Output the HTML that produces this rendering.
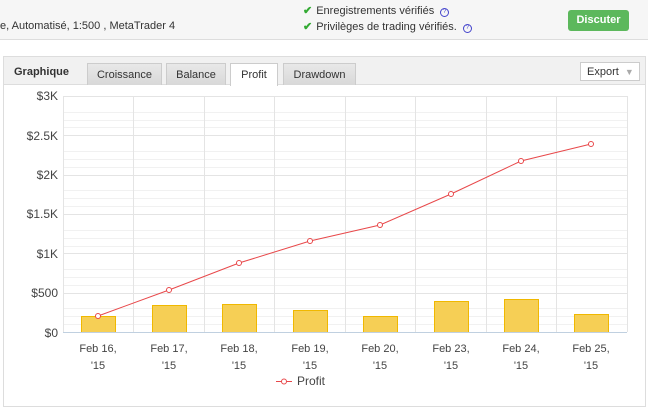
<!DOCTYPE html><html><head><meta charset="utf-8"><style>
body{margin:0;width:648px;height:406px;background:#fff;font-family:"Liberation Sans",sans-serif;position:relative;overflow:hidden}
.top{position:absolute;left:0;top:0;width:648px;height:39px;background:#f6f6f6;border-bottom:1px solid #ddd}
.t{position:absolute;font-size:11px;color:#333;white-space:nowrap}
.btn{position:absolute;left:568px;top:10px;width:61px;height:21px;background:#5cb85c;border-radius:3px;color:#fff;font-weight:bold;font-size:11px;text-align:center;line-height:21px}
.panel{position:absolute;left:3px;top:56px;width:641px;height:349px;border:1px solid #ddd;background:#fff}
.hdr{position:absolute;left:0;top:0;width:641px;height:27px;background:#f1f1f1;border-bottom:1px solid #ddd}
.tab{position:absolute;top:6px;height:21px;border:1px solid #ccc;border-bottom:none;font-size:11px;color:#333;text-align:center;line-height:22px;background:linear-gradient(#e8e8e8,#d8d8d8)}
.q{display:inline-block;width:7px;height:7px;border:1px solid #44c;border-radius:50%;font-size:6px;line-height:7px;text-align:center;color:#44c;margin-left:6px;vertical-align:1px}
.ck{color:#3a3;font-weight:bold;margin-right:4px}
</style></head><body>
<div class="top"></div>
<div class="t" style="left:0;top:20px">e, Automatisé, 1:500 , MetaTrader 4</div>
<div class="t" style="left:303px;top:4px"><span class="ck">✔</span>Enregistrements vérifiés<span class="q">?</span></div>
<div class="t" style="left:303px;top:20px"><span class="ck">✔</span>Privilèges de trading vérifiés.<span class="q">?</span></div>
<div class="btn">Discuter</div>
<div class="panel"><div class="hdr"></div>
<div class="t" style="left:10px;top:9px;font-weight:bold">Graphique</div>
<div class="tab" style="left:83px;width:73px">Croissance</div>
<div class="tab" style="left:162px;width:58px">Balance</div>
<div class="tab" style="left:226px;width:46px;background:#fff;height:22px">Profit</div>
<div class="tab" style="left:279px;width:71px">Drawdown</div>
<div style="position:absolute;left:576px;top:5px;width:60px;height:19px;background:#fff;border:1px solid #ccc;font-size:11px;color:#333;line-height:19px;padding-left:6px;box-sizing:border-box;white-space:nowrap">Export <span style="color:#aaa;font-size:9px;margin-left:3px">▼</span></div>
</div>
<svg style="position:absolute;left:0;top:0" width="648" height="406">
<g stroke="#f1f1f1" stroke-width="1">
<line x1="63" x2="627" y1="112.5" y2="112.5"/><line x1="63" x2="627" y1="120.5" y2="120.5"/><line x1="63" x2="627" y1="127.5" y2="127.5"/>
<line x1="63" x2="627" y1="151.5" y2="151.5"/><line x1="63" x2="627" y1="159.5" y2="159.5"/><line x1="63" x2="627" y1="167.5" y2="167.5"/>
<line x1="63" x2="627" y1="190.5" y2="190.5"/><line x1="63" x2="627" y1="198.5" y2="198.5"/><line x1="63" x2="627" y1="206.5" y2="206.5"/>
<line x1="63" x2="627" y1="230.5" y2="230.5"/><line x1="63" x2="627" y1="238.5" y2="238.5"/><line x1="63" x2="627" y1="246.5" y2="246.5"/>
<line x1="63" x2="627" y1="269.5" y2="269.5"/><line x1="63" x2="627" y1="277.5" y2="277.5"/><line x1="63" x2="627" y1="285.5" y2="285.5"/>
<line x1="63" x2="627" y1="308.5" y2="308.5"/><line x1="63" x2="627" y1="316.5" y2="316.5"/><line x1="63" x2="627" y1="324.5" y2="324.5"/>
</g>
<g stroke="#e4e4e4" stroke-width="1">
<line x1="63" x2="627" y1="96.5" y2="96.5"/><line x1="63" x2="627" y1="135.5" y2="135.5"/><line x1="63" x2="627" y1="175.5" y2="175.5"/><line x1="63" x2="627" y1="214.5" y2="214.5"/><line x1="63" x2="627" y1="253.5" y2="253.5"/><line x1="63" x2="627" y1="293.5" y2="293.5"/>
<line x1="63.5" x2="63.5" y1="96" y2="332"/><line x1="133.5" x2="133.5" y1="96" y2="332"/><line x1="204.5" x2="204.5" y1="96" y2="332"/><line x1="274.5" x2="274.5" y1="96" y2="332"/><line x1="345.5" x2="345.5" y1="96" y2="332"/><line x1="415.5" x2="415.5" y1="96" y2="332"/><line x1="486.5" x2="486.5" y1="96" y2="332"/><line x1="556.5" x2="556.5" y1="96" y2="332"/><line x1="627.5" x2="627.5" y1="96" y2="332"/>
</g>
<g fill="#f6cf55" stroke="#f0b800" stroke-width="1">
<rect x="81.5" y="316.5" width="34" height="16"/><rect x="152.5" y="305.5" width="34" height="27"/><rect x="222.5" y="304.5" width="34" height="28"/><rect x="293.5" y="310.5" width="34" height="22"/><rect x="363.5" y="316.5" width="34" height="16"/><rect x="434.5" y="301.5" width="34" height="31"/><rect x="504.5" y="299.5" width="34" height="33"/><rect x="574.5" y="314.5" width="34" height="18"/>
</g>
<line x1="63" x2="627" y1="332.5" y2="332.5" stroke="#c0d0e0"/>
<polyline fill="none" stroke="#e8484a" stroke-width="1" points="98,316 169,290 239,263 310,241 380,225 451,194 521,161 591,144"/>
<g fill="#fff" stroke="#e8484a" stroke-width="1"><circle cx="98" cy="316" r="2.5"/><circle cx="169" cy="290" r="2.5"/><circle cx="239" cy="263" r="2.5"/><circle cx="310" cy="241" r="2.5"/><circle cx="380" cy="225" r="2.5"/><circle cx="451" cy="194" r="2.5"/><circle cx="521" cy="161" r="2.5"/><circle cx="591" cy="144" r="2.5"/></g>
<g font-family="Liberation Sans" font-size="12" fill="#444" text-anchor="end">
<text x="58" y="100">$3K</text><text x="58" y="140">$2.5K</text><text x="58" y="179">$2K</text><text x="58" y="218">$1.5K</text><text x="58" y="258">$1K</text><text x="58" y="297">$500</text><text x="58" y="337">$0</text></g>
<g font-family="Liberation Sans" font-size="11" fill="#444" text-anchor="middle">
<text x="98" y="352">Feb 16,</text><text x="98" y="369">'15</text>
<text x="169" y="352">Feb 17,</text><text x="169" y="369">'15</text>
<text x="239" y="352">Feb 18,</text><text x="239" y="369">'15</text>
<text x="310" y="352">Feb 19,</text><text x="310" y="369">'15</text>
<text x="380" y="352">Feb 20,</text><text x="380" y="369">'15</text>
<text x="451" y="352">Feb 23,</text><text x="451" y="369">'15</text>
<text x="521" y="352">Feb 24,</text><text x="521" y="369">'15</text>
<text x="591" y="352">Feb 25,</text><text x="591" y="369">'15</text>
</g>
<line x1="276" x2="292" y1="381.5" y2="381.5" stroke="#e8484a"/><circle cx="284" cy="381.5" r="2.5" fill="#fff" stroke="#e8484a"/>
<text x="297" y="385" font-family="Liberation Sans" font-size="12" fill="#444">Profit</text>
</svg>
</body></html>
